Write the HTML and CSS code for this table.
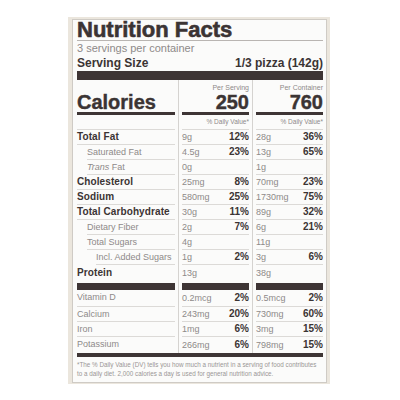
FILE: index.html
```html
<!DOCTYPE html>
<html lang="en">
<head>
    <meta charset="UTF-8">
    <meta name="viewport" content="width=device-width, initial-scale=1.0">
    <title>Nutrition Facts</title>
    <link rel="stylesheet" href="styles.css">
</head>
<body>
    <div class="label">
        <div class="panel">
            <h1 class="title">Nutrition Facts</h1>
            <div class="servings">3 servings per container</div>
            <div class="serving-size">
                <span>Serving Size</span>
                <span>1/3 pizza (142g)</span>
            </div>
            <div class="bar-top"></div>

            <div class="table">
                <!-- Calories -->
                <div class="cell head"><span class="big">Calories</span></div>
                <div class="cell head num"><span class="per">Per Serving</span><span class="big">250</span></div>
                <div class="cell head num"><span class="per">Per Container</span><span class="big">760</span></div>

                <div class="cell dv"></div>
                <div class="cell dv">% Daily Value*</div>
                <div class="cell dv">% Daily Value*</div>

                <div class="cell name bold">Total Fat</div>
                <div class="cell amt"><span>9g</span><b>12%</b></div>
                <div class="cell amt"><span>28g</span><b>36%</b></div>

                <div class="cell name sub">Saturated Fat</div>
                <div class="cell amt"><span>4.5g</span><b>23%</b></div>
                <div class="cell amt"><span>13g</span><b>65%</b></div>

                <div class="cell name sub"><i>Trans</i> Fat</div>
                <div class="cell amt"><span>0g</span></div>
                <div class="cell amt"><span>1g</span></div>

                <div class="cell name bold">Cholesterol</div>
                <div class="cell amt"><span>25mg</span><b>8%</b></div>
                <div class="cell amt"><span>70mg</span><b>23%</b></div>

                <div class="cell name bold">Sodium</div>
                <div class="cell amt"><span>580mg</span><b>25%</b></div>
                <div class="cell amt"><span>1730mg</span><b>75%</b></div>

                <div class="cell name bold">Total Carbohydrate</div>
                <div class="cell amt"><span>30g</span><b>11%</b></div>
                <div class="cell amt"><span>89g</span><b>32%</b></div>

                <div class="cell name sub">Dietary Fiber</div>
                <div class="cell amt"><span>2g</span><b>7%</b></div>
                <div class="cell amt"><span>6g</span><b>21%</b></div>

                <div class="cell name sub">Total Sugars</div>
                <div class="cell amt"><span>4g</span></div>
                <div class="cell amt"><span>11g</span></div>

                <div class="cell name sub2">Incl. Added Sugars</div>
                <div class="cell amt"><span>1g</span><b>2%</b></div>
                <div class="cell amt"><span>3g</span><b>6%</b></div>

                <div class="cell name bold last">Protein</div>
                <div class="cell amt last"><span>13g</span></div>
                <div class="cell amt last"><span>38g</span></div>

                <div class="bar"></div>
                <div class="bar"></div>
                <div class="bar"></div>

                <div class="cell name tall">Vitamin D</div>
                <div class="cell amt tall"><span>0.2mcg</span><b>2%</b></div>
                <div class="cell amt tall"><span>0.5mcg</span><b>2%</b></div>

                <div class="cell name">Calcium</div>
                <div class="cell amt"><span>243mg</span><b>20%</b></div>
                <div class="cell amt"><span>730mg</span><b>60%</b></div>

                <div class="cell name">Iron</div>
                <div class="cell amt"><span>1mg</span><b>6%</b></div>
                <div class="cell amt"><span>3mg</span><b>15%</b></div>

                <div class="cell name last tall">Potassium</div>
                <div class="cell amt last tall"><span>266mg</span><b>6%</b></div>
                <div class="cell amt last tall"><span>798mg</span><b>15%</b></div>
            </div>

            <div class="bar-bottom"></div>
            <p class="footnote">
                *The % Daily Value (DV) tells you how much a nutrient in a serving of food contributes<br>
                to a daily diet. 2,000 calories a day is used for general nutrition advice.
            </p>
        </div>
    </div>
</body>
</html>
```

FILE: styles.css
```css
body {
    margin: 0;
    background: #fff;
    font-family: "Liberation Sans", Arial, sans-serif;
    color: #3b3434;
}
.label {
    width: 262px;
    margin: 17px 0 0 68px;
    padding: 2px 3px 1px 4px;
    box-sizing: border-box;
    background: #ebe6dd;
}
.panel {
    background: #fbfbfa;
    border: 1px solid #cfcbc5;
    padding: 0 3px 0 4px;
}
.title {
    margin: 0;
    font-size: 22px;
    font-weight: bold;
    line-height: 20px;
    -webkit-text-stroke: 0.6px #3b3434;
    border-bottom: 1px solid #b9b5b2;
}
.servings {
    font-size: 11px;
    line-height: 15px;
    color: #8e8a89;
}
.serving-size {
    display: flex;
    justify-content: space-between;
    font-size: 12px;
    font-weight: bold;
    line-height: 14px;
}
.bar-top {
    height: 9px;
    margin-top: 1px;
    background: #3e3535;
}

/* three column grid, with the thin dividers drawn in the gaps */
.table {
    display: grid;
    grid-template-columns: 98px 67px 67px;
    column-gap: 7px;
    background:
        linear-gradient(#d5d3d0, #d5d3d0) 101px 0 / 1px 100% no-repeat,
        linear-gradient(#d5d3d0, #d5d3d0) 175px 0 / 1px 100% no-repeat;
}
.cell {
    line-height: 14px;
    border-bottom: 1px solid #dcdad7;
}
.head {
    height: 32px;
    display: flex;
    flex-direction: column;
    justify-content: flex-end;
    border-bottom: 3px solid #3e3535;
}
.head.num {
    align-items: flex-end;
}
.big {
    font-size: 20px;
    font-weight: bold;
    line-height: 20px;
    -webkit-text-stroke: 0.4px #3b3434;
}
.per {
    font-size: 7px;
    line-height: 8px;
    color: #8e8a89;
}
.dv {
    font-size: 6.5px;
    color: #8e8a89;
    text-align: right;
}
.name {
    font-size: 9px;
    color: #8e8a89;
}
.name.bold {
    font-size: 10px;
    font-weight: bold;
    color: #3b3434;
    letter-spacing: 0.1px;
}
.sub {
    margin-left: 10px;
}
.sub2 {
    margin-left: 19px;
}
.amt {
    display: flex;
    justify-content: space-between;
    align-items: baseline;
}
.amt span {
    font-size: 9px;
    color: #8e8a89;
}
.amt b {
    font-size: 10px;
    font-weight: bold;
}
.last {
    border-bottom: none;
    line-height: 16px;
}
.tall {
    line-height: 15px;
}
.bar {
    height: 7px;
    margin-top: 2px;
    background: #3e3535;
}
.bar-bottom {
    height: 4px;
    background: #3e3535;
}
.footnote {
    margin: 0;
    padding: 3px 0 4px;
    font-size: 6.3px;
    line-height: 9px;
    color: #9a9695;
    white-space: nowrap;
}
```
